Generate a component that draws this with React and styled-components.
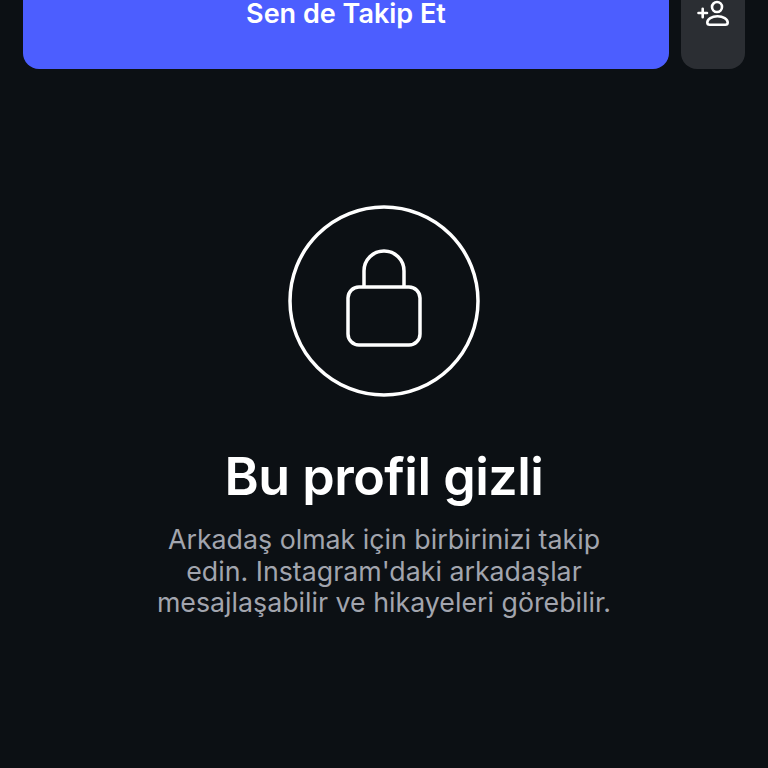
import React from "react";
import styled, { createGlobalStyle } from "styled-components";

const GlobalStyle = createGlobalStyle`
	html, body {
		margin: 0;
		padding: 0;
		height: 100%;
		overflow: hidden;
		background-color: #0c1014;
	}
`;

const Page = styled.div`
	width: 768px;
	height: 768px;
	overflow: hidden;
	background-color: #0c1014;
	font-family: Inter, "Noto Sans", sans-serif;
	display: flex;
	flex-direction: column;
	align-items: center;
`;

const ActionRow = styled.div`
	display: flex;
	gap: 12px;
	width: 722px;
	height: 69px;
	flex-shrink: 0;
`;

const FollowButton = styled.button`
	flex: 1;
	border: none;
	border-radius: 0 0 16px 16px;
	background-color: #4c5eff;
	color: #ffffff;
	font-family: inherit;
	font-size: 27px;
	line-height: 26px;
	font-weight: 600;
	padding: 1px 0 42px;
`;

const SuggestButton = styled.button`
	width: 64px;
	border: none;
	border-radius: 0 0 16px 16px;
	background-color: #2b2e33;
	color: #ffffff;
	padding: 0;
	display: flex;
	align-items: flex-start;
	justify-content: center;
`;

const LockCircle = styled.svg`
	display: block;
	margin-top: 136px;
	flex-shrink: 0;
`;

const Title = styled.h2`
	margin: 51px 0 0;
	color: #ffffff;
	font-size: 52px;
	line-height: 58px;
	font-weight: 600;
	letter-spacing: -0.5px;
	text-align: center;
`;

const Description = styled.p`
	margin: 18px 0 0;
	color: #a2a5ae;
	font-size: 26.75px;
	line-height: 31.5px;
	font-weight: 400;
	text-align: center;
`;

const App = () => {
	return (
		<Page>
			<GlobalStyle />
			<ActionRow>
				<FollowButton>Sen de Takip Et</FollowButton>
				<SuggestButton>
					<svg width="36" height="28" viewBox="0 0 36 28" fill="none" stroke="#fff" strokeWidth="2.6" strokeLinecap="round">
						<circle cx="22" cy="7" r="5" />
						<path d="M12.3 22.5c0-3.6 4.5-6.2 10.2-6.2s10.2 2.6 10.2 6.2c0 1.4-1 2.2-2.4 2.2H14.7c-1.4 0-2.4-.8-2.4-2.2z" />
						<path d="M3.5 13h8.5M7.7 8.7v8.6" />
					</svg>
				</SuggestButton>
			</ActionRow>
			<LockCircle width="192" height="192" viewBox="0 0 192 192" fill="none" stroke="#fff" strokeWidth="3.5">
				<circle cx="96" cy="96" r="94" />
				<rect x="60" y="82" width="72" height="58" rx="11" />
				<path d="M76 82V66a20 20 0 0 1 40 0v16" />
			</LockCircle>
			<Title>Bu profil gizli</Title>
			<Description>
				Arkadaş olmak için birbirinizi takip
				<br />
				edin. Instagram'daki arkadaşlar
				<br />
				mesajlaşabilir ve hikayeleri görebilir.
			</Description>
		</Page>
	);
};

export default App;
